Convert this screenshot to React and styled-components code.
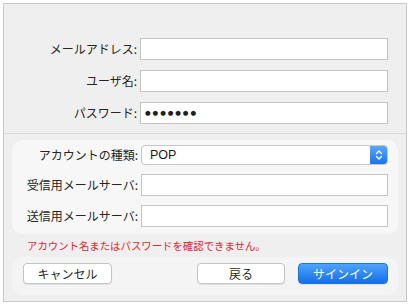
import React from "react";
import styled, {createGlobalStyle} from "styled-components";

const GlobalStyle = createGlobalStyle`
  html, body{
    margin: 0;
    padding: 0;
    background: #ffffff;
  }
  body{
    font-family: "Noto Sans CJK JP", "Noto Sans", sans-serif;
    color: #2a2a2a;
  }
`

const Window = styled.div`
  margin: 3px 0 0 3px;
  width: 402px;
  height: 297px;
  border: 1px solid #c9c9c9;
  background-color: #efefef;
  display: flex;
  flex-direction: column;
`

const TopSection = styled.div`
  display: grid;
  grid-template-columns: 133px 248px;
  column-gap: 3px;
  row-gap: 10px;
  grid-auto-rows: 22px;
  padding: 34px 0 9px 0;
  border-bottom: 1px solid #dadada;
`

const GroupBox = styled.div`
  margin: 6px 8px 0 8px;
  padding: 5px 0 7px 0;
  border-radius: 10px;
  background-color: #f7f7f7;
  display: grid;
  grid-template-columns: 126px 247px;
  column-gap: 3px;
  grid-template-rows: 20px 22px 22px;
  row-gap: 9px;
  align-items: stretch;
`

const Label = styled.label`
  font-size: 12px;
  line-height: 1;
  text-align: right;
  align-self: center;
  white-space: nowrap;
  color: #262626;
`

const TextField = styled.div`
  box-sizing: border-box;
  background: #ffffff;
  border: 1px solid #c3c3c3;
  display: flex;
  align-items: center;
  padding-left: 4px;
`

const Dots = styled.span`
  font-family: "DejaVu Sans", sans-serif;
  font-size: 6.5px;
  letter-spacing: 1.9px;
  color: #1e1e1e;
`

const Select = styled.div`
  box-sizing: border-box;
  background: #ffffff;
  border: 1px solid #c6c6c6;
  border-radius: 4px;
  display: flex;
  align-items: center;
  justify-content: space-between;
  padding-left: 8px;
  overflow: hidden;
  span{
    font-family: "Liberation Sans", sans-serif;
    font-size: 12.5px;
    color: #1c1c1c;
  }
`

const Stepper = styled.div`
  width: 17px;
  height: 100%;
  background: linear-gradient(#56a8fb, #1b74ea);
  display: flex;
  align-items: center;
  justify-content: center;
`

const ErrorText = styled.p`
  margin: 5px 0 0 23px;
  font-size: 10.4px;
  line-height: 13px;
  color: #e1262c;
`

const ButtonBar = styled.div`
  margin: 5px 8px 0 8px;
  padding: 6px 10px 11px 11px;
  border-radius: 10px;
  background-color: #f4f4f4;
  display: flex;
  align-items: center;
`

const Button = styled.button`
  box-sizing: border-box;
  width: ${p => p.$w}px;
  height: 21px;
  margin-right: ${p => p.$gap || 0}px;
  border-radius: 4px;
  font-family: "Noto Sans CJK JP", sans-serif;
  font-size: 12px;
  padding: 0;
  border: 1px solid ${p => p.$primary ? "#1d72e6" : "#c4c4c4"};
  background: ${p => p.$primary ? "linear-gradient(#4ea4fb, #156fe7)" : "#ffffff"};
  color: ${p => p.$primary ? "#ffffff" : "#2a2a2a"};
  box-shadow: 0 1px 1px rgba(0,0,0,0.08);
`

const Spacer = styled.div`
  flex: 1;
`

export default function App(){
    return <>
        <GlobalStyle/>
        <Window>
            <TopSection>
                <Label>メールアドレス:</Label>
                <TextField/>
                <Label>ユーザ名:</Label>
                <TextField/>
                <Label>パスワード:</Label>
                <TextField><Dots>●●●●●●●</Dots></TextField>
            </TopSection>
            <GroupBox>
                <Label>アカウントの種類:</Label>
                <Select>
                    <span>POP</span>
                    <Stepper>
                        <svg width="8" height="12" viewBox="0 0 8 12">
                            <path d="M1.5 4.5 L4 2 L6.5 4.5 M1.5 7.5 L4 10 L6.5 7.5" fill="none" stroke="#fff" strokeWidth="1.4" strokeLinecap="round" strokeLinejoin="round"/>
                        </svg>
                    </Stepper>
                </Select>
                <Label>受信用メールサーバ:</Label>
                <TextField/>
                <Label>送信用メールサーバ:</Label>
                <TextField/>
            </GroupBox>
            <ErrorText>アカウント名またはパスワードを確認できません。</ErrorText>
            <ButtonBar>
                <Button $w={89}>キャンセル</Button>
                <Spacer/>
                <Button $w={88} $gap={13}>戻る</Button>
                <Button $w={90} $primary>サインイン</Button>
            </ButtonBar>
        </Window>
    </>
}
